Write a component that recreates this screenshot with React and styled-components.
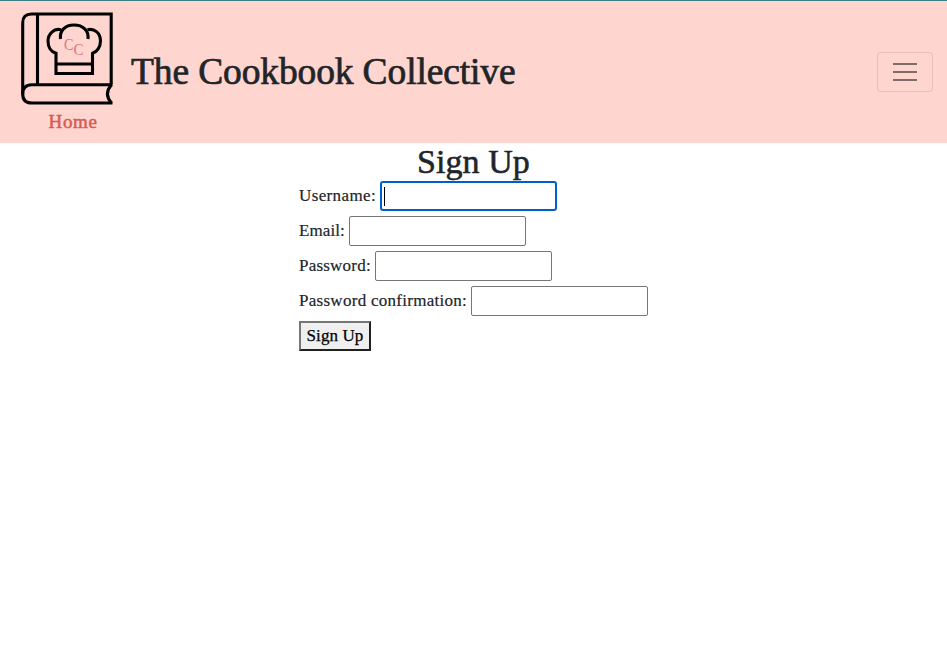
import React from 'react';
import styled, { createGlobalStyle } from 'styled-components';

const GlobalStyle = createGlobalStyle`
  *, *::before, *::after { box-sizing: border-box; }
  body {
    margin: 0;
    background: #fff;
    color: #212529;
    font-family: Georgia, "Liberation Serif", serif;
    font-size: 17px;
    line-height: 24px;
  }
`;

const Navbar = styled.header`
  display: flex;
  align-items: center;
  height: 143px;
  padding: 0 14px 0 21px;
  border-top: 1px solid #3a7f86;
  background: #fed6cf;
`;

const Brand = styled.a`
  display: flex;
  flex-direction: column;
  align-items: center;
  width: 92px;
  height: 142px;
  padding-top: 11px;
  color: #d9594f;
  text-decoration: none;
`;

const Logo = styled.svg`
  display: block;
  flex: none;
  width: 92px;
  height: 93px;
`;

const HomeLabel = styled.span`
  margin: 5px 0 0 12px;
  font-size: 19px;
  letter-spacing: 0.6px;
  -webkit-text-stroke: 0.5px currentColor;
`;

const Title = styled.h1`
  margin: 0 auto 0 18px;
  font-size: 37.5px;
  font-weight: 400;
  line-height: 46px;
  letter-spacing: -0.13px;
  white-space: nowrap;
  -webkit-text-stroke: 0.7px currentColor;
`;

const Toggler = styled.button`
  display: flex;
  align-items: center;
  justify-content: center;
  width: 56px;
  height: 40px;
  padding: 0;
  border: 1px solid rgba(0, 0, 0, 0.1);
  border-radius: 4px;
  background: transparent;
`;

const Main = styled.main`
  display: flex;
  flex-direction: column;
  align-items: center;
`;

const Heading = styled.h2`
  margin: 0;
  font-size: 34px;
  font-weight: 400;
  line-height: 38px;
  letter-spacing: 0.05px;
  -webkit-text-stroke: 0.55px currentColor;
`;

const Form = styled.form`
  display: flex;
  flex-direction: column;
  align-items: flex-start;
  gap: 5px;
  width: 349px;
`;

const Field = styled.div`
  display: flex;
  align-items: center;
  height: 30px;
`;

const Label = styled.label`
  flex: none;
  width: ${({ $width }) => $width}px;
  letter-spacing: ${({ $spacing }) => $spacing}px;
  white-space: nowrap;
  -webkit-text-stroke: 0.2px currentColor;
`;

const Input = styled.input`
  width: 177px;
  height: 30px;
  padding: 1px 3px;
  border: ${({ $active }) => ($active ? '2px solid #005fcc' : '1px solid #767676')};
  border-radius: ${({ $active }) => ($active ? 3 : 2)}px;
  outline: none;
  background: #fff;
  caret-color: transparent;
  font: inherit;
`;

const InputWrap = styled.div`
  position: relative;
  display: flex;
`;

const Caret = styled.span`
  position: absolute;
  top: 6px;
  left: 4px;
  width: 1px;
  height: 19px;
  background: #000;
`;

const Submit = styled.button`
  width: 72px;
  height: 30px;
  padding: 0;
  border: 2px solid;
  border-color: #767676 #212121 #212121 #767676;
  border-radius: 0;
  background: #efefef;
  color: #000;
  font: inherit;
  letter-spacing: 0.1px;
  white-space: nowrap;
  -webkit-text-stroke: 0.25px currentColor;
`;

const fields = [
  { id: 'username', label: 'Username:', width: 81, spacing: 0.38, type: 'text', active: true },
  { id: 'email', label: 'Email:', width: 50, spacing: 0.1, type: 'email' },
  { id: 'password', label: 'Password:', width: 76, spacing: 0.22, type: 'password' },
  { id: 'confirmation', label: 'Password confirmation:', width: 172, spacing: 0.28, type: 'password' },
];

function CookbookLogo() {
  return (
    <Logo viewBox="0 0 92 93" fill="none" stroke="#000" strokeWidth="3.1" aria-hidden="true">
      <path d="M1.7 82V11Q1.7 2 10.5 2H90.2V72" />
      <path d="M16.5 2V72" />
      <path d="M91.5 72.8H11Q1.7 72.8 1.7 82Q1.7 91 11 91H91.5" />
      <path d="M90.4 72.8Q82.5 82 90.4 91" />
      <path d="M39.5 27C38.5 18.5 44 13 53 13C62 13 68 18.5 67 27" />
      <path d="M40 17.8C33 15.8 27 22 27 29C27 35 30 40 35 41.3V61.5H71.5V41.3C76 40 79.5 35 79.5 29C79.5 21 73 15.8 66.5 17.8" />
      <path d="M35 52H71.5" />
      <g fill="#df7580" stroke="none" fontFamily="Liberation Serif, serif" fontSize="16.5">
        <text x="43" y="38" textLength="9.5" lengthAdjust="spacingAndGlyphs">C</text>
        <text x="52.5" y="42.5" textLength="10" lengthAdjust="spacingAndGlyphs">C</text>
      </g>
    </Logo>
  );
}

export default function App() {
  return (
    <>
      <GlobalStyle />
      <Navbar>
        <Brand href="#">
          <CookbookLogo />
          <HomeLabel>Home</HomeLabel>
        </Brand>
        <Title>The Cookbook Collective</Title>
        <Toggler type="button" aria-label="Toggle navigation">
          <svg width="30" height="30" viewBox="0 0 30 30" stroke="rgba(0,0,0,.5)" strokeWidth="2">
            <path d="M3 7H27M3 15H27M3 23H27" />
          </svg>
        </Toggler>
      </Navbar>
      <Main>
        <Heading>Sign Up</Heading>
        <Form>
          {fields.map((f) => (
            <Field key={f.id}>
              <Label htmlFor={f.id} $width={f.width} $spacing={f.spacing}>{f.label}</Label>
              <InputWrap>
                <Input id={f.id} type={f.type} $active={f.active} />
                {f.active && <Caret />}
              </InputWrap>
            </Field>
          ))}
          <Submit type="button">Sign Up</Submit>
        </Form>
      </Main>
    </>
  );
}
